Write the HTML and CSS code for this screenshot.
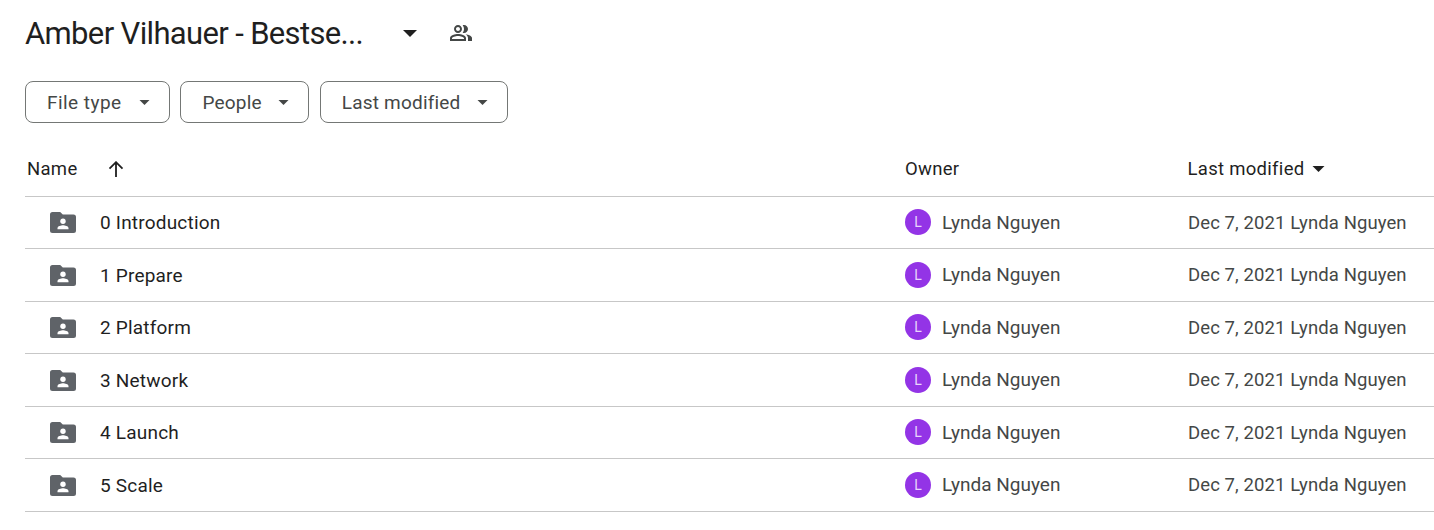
FILE: index.html
```html
<!DOCTYPE html>
<html lang="en">
<head>
<meta charset="utf-8">
<title>Amber Vilhauer - Bestseller</title>
<link rel="stylesheet" href="styles.css">
</head>
<body>
<svg class="defs" width="0" height="0" aria-hidden="true">
  <symbol id="caret" viewBox="0 0 10 5"><path d="M0 0h10L5 5z"/></symbol>
  <symbol id="folder" viewBox="0 0 26 21"><path d="M2.5 0h7.7l2.6 2.6h10.7A2.5 2.5 0 0 1 26 5.1v13.4a2.5 2.5 0 0 1-2.5 2.5h-21A2.5 2.5 0 0 1 0 18.500V2.500A2.500 2.500 0 0 1 2.500 0z"/><circle cx="13" cy="9.300" r="2.700" fill="#fff"/><path d="M7.500 17.300v-1.200c0-1.900 3.700-2.800 5.500-2.800s5.500.9 5.500 2.800v1.200z" fill="#fff"/></symbol>
</svg>
<main class="page">
  <header class="title-row">
    <h1 class="title">Amber Vilhauer - Bestse...</h1>
    <svg class="title-caret"><use href="#caret"/></svg>
    <svg class="shared" viewBox="0 0 24 24"><path d="M16.670 13.130C18.040 14.060 19 15.320 19 17v3h4v-3c0-2.180-3.570-3.470-6.330-3.870zM15 12c2.210 0 4-1.790 4-4s-1.790-4-4-4c-.47 0-.91.100-1.330.240A5.980 5.980 0 0 1 15 8c0 1.490-.55 2.840-1.330 3.760.42.140.86.240 1.330.240zM9 12c2.210 0 4-1.790 4-4s-1.790-4-4-4-4 1.790-4 4 1.790 4 4 4zm0-6c1.100 0 2 .9 2 2s-.9 2-2 2-2-.9-2-2 .9-2 2-2zm0 7c-2.670 0-8 1.340-8 4v3h16v-3c0-2.660-5.330-4-8-4zm6 5H3v-.990C3.200 16.290 6.300 15 9 15s5.800 1.290 6 2v1z"/></svg>
  </header>

  <div class="filters">
    <button class="chip chip-type">File type<svg class="chip-caret"><use href="#caret"/></svg></button>
    <button class="chip chip-people">People<svg class="chip-caret"><use href="#caret"/></svg></button>
    <button class="chip chip-mod">Last modified<svg class="chip-caret"><use href="#caret"/></svg></button>
  </div>

  <div class="head row-grid">
    <div class="head-name">Name
      <svg class="sort" viewBox="0 0 16 16"><path d="M8 16V1.200M1.500 7.700 8 1.200l6.500 6.500"/></svg>
    </div>
    <div>Owner</div>
    <div class="head-mod">Last modified<svg class="head-caret"><use href="#caret"/></svg></div>
  </div>

  <div class="row row-grid">
    <div class="name"><svg class="folder"><use href="#folder"/></svg>0 Introduction</div>
    <div class="owner"><span class="avatar">L</span>Lynda Nguyen</div>
    <div class="mod">Dec 7, 2021 Lynda Nguyen</div>
  </div>
  <div class="row row-grid">
    <div class="name"><svg class="folder"><use href="#folder"/></svg>1 Prepare</div>
    <div class="owner"><span class="avatar">L</span>Lynda Nguyen</div>
    <div class="mod">Dec 7, 2021 Lynda Nguyen</div>
  </div>
  <div class="row row-grid">
    <div class="name"><svg class="folder"><use href="#folder"/></svg>2 Platform</div>
    <div class="owner"><span class="avatar">L</span>Lynda Nguyen</div>
    <div class="mod">Dec 7, 2021 Lynda Nguyen</div>
  </div>
  <div class="row row-grid">
    <div class="name"><svg class="folder"><use href="#folder"/></svg>3 Network</div>
    <div class="owner"><span class="avatar">L</span>Lynda Nguyen</div>
    <div class="mod">Dec 7, 2021 Lynda Nguyen</div>
  </div>
  <div class="row row-grid">
    <div class="name"><svg class="folder"><use href="#folder"/></svg>4 Launch</div>
    <div class="owner"><span class="avatar">L</span>Lynda Nguyen</div>
    <div class="mod">Dec 7, 2021 Lynda Nguyen</div>
  </div>
  <div class="row row-grid">
    <div class="name"><svg class="folder"><use href="#folder"/></svg>5 Scale</div>
    <div class="owner"><span class="avatar">L</span>Lynda Nguyen</div>
    <div class="mod">Dec 7, 2021 Lynda Nguyen</div>
  </div>
</main>
</body>
</html>
```
FILE: styles.css
```css
* { box-sizing: border-box; }
html, body { margin: 0; background: #fff; overflow: hidden; }
body { font-family: Roboto, "Noto Sans", sans-serif; color: #1f1f1f; }
.defs { position: absolute; }
.page { padding: 0 0 0 25px; }

.title-row { display: flex; align-items: center; height: 66px; }
.title { margin: 1px 0 0; font-size: 31px; font-weight: 400; line-height: 40px; letter-spacing: -0.65px; width: 378px; white-space: nowrap; }
.title-caret { width: 14px; height: 7px; fill: #1f1f1f; }
.shared { width: 24px; height: 24px; fill: #444746; margin-left: 32px; }

.filters { display: flex; gap: 10.400px; margin-top: 15px; }
.chip { display: flex; align-items: center; justify-content: space-between; height: 42px; padding: 1px 19px 0 21px; background: #fff; border: 1px solid #747775; border-radius: 8px; font: 400 19px Roboto, sans-serif; letter-spacing: 0.2px; color: #444746; }
.chip-type { width: 145px; letter-spacing: 0.45px; }
.chip-people { width: 129px; }
.chip-mod { width: 188px; }
.chip-caret { width: 11px; height: 5px; fill: #444746; }

.row-grid { display: grid; align-items: center; border-bottom: 1px solid #c7c7c7; grid-template-columns: 880px 283px 1fr; }
.head { height: 51.500px; margin-top: 22px; padding: 0 0 2px 2px; font-size: 18.500px; letter-spacing: 0.3px; color: #1f1f1f; grid-template-columns: 878px 282.500px 1fr; }
.head-name { display: flex; align-items: center; }
.sort { width: 16px; height: 16px; margin-left: 30px; fill: none; stroke: #1f1f1f; stroke-width: 1.800; }
.head-mod { display: flex; align-items: center; }
.head-caret { width: 13px; height: 6px; margin-left: 7px; fill: #1f1f1f; }

.row { height: 52.500px; }
.name { display: flex; align-items: center; padding: 1px 0 0 25px; font-size: 19px; letter-spacing: 0.2px; color: #1f1f1f; }
.folder { width: 26px; height: 21px; fill: #5f6368; margin-right: 24px; }
.owner { display: flex; align-items: center; gap: 11px; font-size: 19px; color: #444746; }
.avatar { display: flex; align-items: center; justify-content: center; width: 26px; height: 26px; border-radius: 50%; background: #9334e6; color: #e9d5fb; font-size: 14px; }
.mod { padding-top: 1px; font-size: 18.500px; letter-spacing: 0.1px; color: #444746; white-space: nowrap; }
```
